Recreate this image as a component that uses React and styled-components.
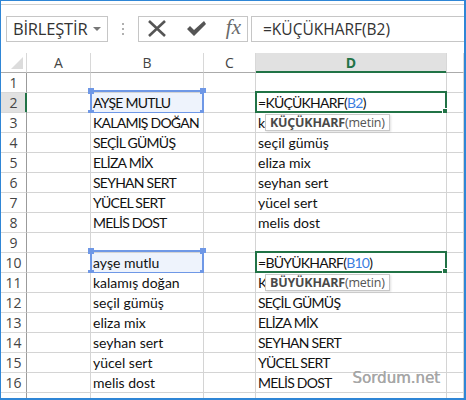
import React from "react"
import styled, { createGlobalStyle } from "styled-components"

const Global = createGlobalStyle`
  html, body { margin: 0; padding: 0; background: #fff; }
  * { box-sizing: border-box; }
`

const Frame = styled.div`
  position: relative;
  width: 466px;
  height: 400px;
  overflow: hidden;
  background: #fff;
  border-style: solid;
  border-color: #2f86d6;
  border-width: 1px 2px 2px 1px;
`

const Toolbar = styled.div`
  display: flex;
  align-items: center;
  height: 49px;
  margin-top: 3px;
  border-top: 1px solid #d0d0d0;
  padding: 9px 0 10px 5px;
`

const NameBox = styled.div`
  display: flex;
  align-items: center;
  justify-content: space-between;
  width: 102px;
  height: 26px;
  border: 1px solid #c6c6c6;
  padding: 0 6px 0 6px;
  font-family: "Open Sans", sans-serif;
  font-size: 16.5px;
  letter-spacing: -0.2px;
  color: #333;
`

const Arrow = styled.span`
  width: 0;
  height: 0;
  border-left: 4px solid transparent;
  border-right: 4px solid transparent;
  border-top: 4px solid #777;
`

const Dots = styled.div`
  display: flex;
  flex-direction: column;
  gap: 3px;
  margin: 0 14px 0 14px;
  span {
    width: 2px;
    height: 2px;
    background: #b0b0b0;
  }
`

const Tools = styled.div`
  display: flex;
  align-items: center;
  justify-content: space-between;
  width: 110px;
  height: 26px;
  border: 1px solid #c6c6c6;
  padding: 0 6px 0 8px;
`

const Fx = styled.span`
  font-family: "Liberation Serif", serif;
  font-style: italic;
  font-size: 21px;
  color: #6a6a6a;
  line-height: 1;
  margin-top: -2px;
`

const FormulaInput = styled.div`
  flex: 1;
  height: 26px;
  margin-left: 3px;
  border: 1px solid #c6c6c6;
  border-right: none;
  padding-left: 11px;
  display: flex;
  align-items: center;
  font-family: "Open Sans", sans-serif;
  font-size: 15.5px;
  color: #333;
`

const Sheet = styled.div`
  display: grid;
  grid-template-columns: 26px 64px 113px 52px 191px 1fr;
  grid-auto-rows: 20px;
`

const ColHead = styled.div`
  display: flex;
  align-items: center;
  justify-content: center;
  border-right: 1px solid #d8d8d8;
  border-bottom: 1px solid ${p => (p.$active ? "#217346" : "#ababab")};
  box-shadow: ${p => (p.$active ? "inset 0 -1px 0 #217346" : "none")};
  background: ${p => (p.$active ? "#e1e1e1" : "#fff")};
  color: ${p => (p.$active ? "#217346" : "#444")};
  font-weight: ${p => (p.$active ? 700 : 400)};
  font-family: "Open Sans", sans-serif;
  font-size: 14px;
`

const Corner = styled(ColHead)`
  position: relative;
  &::after {
    content: "";
    position: absolute;
    right: 3px;
    bottom: 3px;
    width: 0;
    height: 0;
    border-left: 12px solid transparent;
    border-bottom: 12px solid #dcdcdc;
  }
`

const RowHead = styled.div`
  display: flex;
  align-items: center;
  justify-content: center;
  border-right: 1px solid ${p => (p.$active ? "#217346" : "#9b9b9b")};
  border-bottom: 1px solid #d8d8d8;
  box-shadow: ${p => (p.$active ? "inset -1px 0 0 #217346" : "none")};
  background: ${p => (p.$active ? "#e1e1e1" : "#fff")};
  color: #444;
  font-family: "Open Sans", sans-serif;
  font-size: 14px;
`

const Cell = styled.div`
  position: relative;
  display: flex;
  align-items: center;
  padding-left: 2px;
  border-right: 1px solid #d4d4d4;
  border-bottom: 1px solid #d4d4d4;
  background: ${p => (p.$picked ? "#eef3fc" : "#fff")};
  font-family: Lato, "Open Sans", sans-serif;
  font-size: 14px;
  letter-spacing: ${p => (p.$caps ? "-0.75px" : "0")};
  color: #111;
  white-space: nowrap;
  overflow: visible;
`

const Ref = styled.span`
  color: #3b7ee0;
`

const Picked = styled.div`
  position: absolute;
  left: -1px;
  top: -3px;
  right: -1px;
  bottom: -2px;
  border: 2px solid #6f98e6;
  pointer-events: none;
  i {
    position: absolute;
    width: 6px;
    height: 6px;
    background: #6f98e6;
  }
  i:nth-child(1) { left: -4px; top: -4px; }
  i:nth-child(2) { right: -4px; top: -4px; }
  i:nth-child(3) { left: -4px; bottom: -4px; }
  i:nth-child(4) { right: -4px; bottom: -4px; }
`

const Active = styled.div`
  position: absolute;
  left: -1px;
  top: -2px;
  right: -1px;
  bottom: -1px;
  border: 2px solid #217346;
  pointer-events: none;
  &::after {
    content: "";
    position: absolute;
    right: -4px;
    bottom: -4px;
    width: 5px;
    height: 5px;
    background: #217346;
    border: 1px solid #fff;
  }
`

const Tip = styled.div`
  position: absolute;
  z-index: 3;
  left: 9px;
  top: calc(100% + 2px);
  height: 17px;
  padding: 0 4px;
  display: flex;
  align-items: center;
  background: #fff;
  border: 1px solid #c8c8c8;
  box-shadow: 1px 1px 2px rgba(0, 0, 0, 0.12);
  font-family: "Open Sans", sans-serif;
  font-size: 12.5px;
  letter-spacing: -0.2px;
  color: #555;
  b { font-weight: 700; color: #4a4a4a; }
`

const Mark = styled.div`
  position: absolute;
  right: 24px;
  bottom: 11px;
  font-family: "DejaVu Sans", sans-serif;
  font-size: 15px;
  color: #a6a6a6;
  text-shadow: 0.4px 0 0 #a6a6a6;
`

const CrossIcon = () => (
  <svg width="20" height="17" viewBox="0 0 20 17">
    <path d="M2 1 L18 16 M18 1 L2 16" stroke="#555" strokeWidth="2.6" fill="none" />
  </svg>
)

const CheckIcon = () => (
  <svg width="21" height="17" viewBox="0 0 21 17">
    <path d="M1 9 L4 6 L8 10 L18 1 L20 4 L8 16 Z" fill="#555" />
  </svg>
)

const rows = [
  ["", ""],
  ["AYŞE MUTLU", "f1"],
  ["KALAMIŞ DOĞAN", "kalamış doğan"],
  ["SEÇİL GÜMÜŞ", "seçil gümüş"],
  ["ELİZA MİX", "eliza mix"],
  ["SEYHAN SERT", "seyhan sert"],
  ["YÜCEL SERT", "yücel sert"],
  ["MELİS DOST", "melis dost"],
  ["", ""],
  ["ayşe mutlu", "f2"],
  ["kalamış doğan", "KALAMIŞ DOĞAN"],
  ["seçil gümüş", "SEÇİL GÜMÜŞ"],
  ["eliza mix", "ELİZA MİX"],
  ["seyhan sert", "SEYHAN SERT"],
  ["yücel sert", "YÜCEL SERT"],
  ["melis dost", "MELİS DOST"],
  ["", ""],
]

const formulas = {
  f1: { fn: "KÜÇÜKHARF", ref: "B2" },
  f2: { fn: "BÜYÜKHARF", ref: "B10" },
}

const isCaps = s => s !== "" && s === s.toLocaleUpperCase("tr")

const DCell = ({ value }) => {
  const f = formulas[value]
  if (!f) return <Cell $caps={isCaps(value)}>{value}</Cell>
  return (
    <Cell $caps>
      ={f.fn}(<Ref>{f.ref}</Ref>)
      <Active />
      <Tip>
        <b>{f.fn}</b>(metin)
      </Tip>
    </Cell>
  )
}

const App = () => (
  <Frame>
    <Global />
    <Toolbar>
      <NameBox>
        BİRLEŞTİR
        <Arrow />
      </NameBox>
      <Dots>
        <span />
        <span />
        <span />
      </Dots>
      <Tools>
        <CrossIcon />
        <CheckIcon />
        <Fx>fx</Fx>
      </Tools>
      <FormulaInput>=KÜÇÜKHARF(B2)</FormulaInput>
    </Toolbar>

    <Sheet>
      <Corner />
      <ColHead>A</ColHead>
      <ColHead>B</ColHead>
      <ColHead>C</ColHead>
      <ColHead $active>D</ColHead>
      <ColHead />
      {rows.map(([b, d], i) => {
        const n = i + 1
        const picked = n === 2 || n === 10
        return (
          <React.Fragment key={n}>
            <RowHead $active={n === 2}>{n <= 16 ? n : ""}</RowHead>
            <Cell />
            <Cell $picked={picked} $caps={isCaps(b)}>
              {b}
              {picked && (
                <Picked>
                  <i />
                  <i />
                  <i />
                  <i />
                </Picked>
              )}
            </Cell>
            <Cell />
            <DCell value={d} />
            <Cell />
          </React.Fragment>
        )
      })}
    </Sheet>
    <Mark>Sordum.net</Mark>
  </Frame>
)

export default App
